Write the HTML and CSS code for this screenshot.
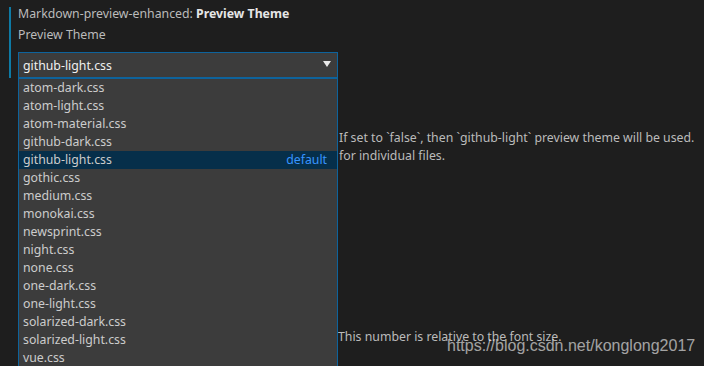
FILE: index.html
```html
<!DOCTYPE html>
<html lang="en">
<head>
    <meta charset="UTF-8">
    <title>Settings - Preview Theme</title>
    <link rel="stylesheet" href="styles.css">
</head>
<body>
<div class="setting">
    <div class="setting-title">Markdown-preview-enhanced: <b>Preview Theme</b></div>
    <div class="setting-desc">Preview Theme</div>
    <div class="select-wrap">
        <div class="select-box">
            <span>github-light.css</span>
            <svg class="arrow" width="8" height="6" viewBox="0 0 8 6"><path d="M0 0h8L4 6z" fill="#e8e8e8"/></svg>
        </div>
        <ul class="options">
            <li>atom-dark.css</li>
            <li>atom-light.css</li>
            <li>atom-material.css</li>
            <li>github-dark.css</li>
            <li class="selected">github-light.css <span class="tag">default</span></li>
            <li>gothic.css</li>
            <li>medium.css</li>
            <li>monokai.css</li>
            <li>newsprint.css</li>
            <li>night.css</li>
            <li>none.css</li>
            <li>one-dark.css</li>
            <li>one-light.css</li>
            <li>solarized-dark.css</li>
            <li>solarized-light.css</li>
            <li>vue.css</li>
        </ul>
    </div>
</div>

<div class="behind">
    <div class="line">If set to `false`, then `github-light` preview theme will be used.</div>
    <div class="line">for individual files.</div>
    <div class="line later">This number is relative to the font size.</div>
</div>

<div class="watermark">https://blog.csdn.net/konglong2017</div>
</body>
</html>
```

FILE: styles.css
```css
body {
    margin: 0;
    height: 100vh;
    overflow: hidden;
    background: #1e1e1e;
    color: #cccccc;
    font-family: 'Noto Sans', 'Open Sans', sans-serif;
    font-size: 12.3px;
    position: relative;
}

.setting {
    margin: 7px 0 0 9px;
    padding-left: 7px;
    border-left: 2px solid #0e7aa5;
}

.setting-title {
    color: #bbbbbb;
    line-height: 14px;
    white-space: nowrap;
}

.setting-title b {
    color: #e6e6e6;
}

.setting-desc {
    color: #bbbbbb;
    line-height: 18px;
    margin-top: 5px;
}

.select-wrap {
    position: relative;
    margin-top: 8px;
    width: 320px;
}

.select-box {
    height: 24px;
    background: #3c3c3c;
    border: 1px solid #0e639c;
    display: flex;
    align-items: center;
    justify-content: space-between;
    padding: 0 6px 0 4px;
    color: #f0f0f0;
    box-sizing: content-box;
    width: 308px;
}

.arrow {
    margin-bottom: 3px;
}

.options {
    position: absolute;
    top: 26px;
    left: 0;
    width: 318px;
    margin: 0;
    padding: 0;
    list-style: none;
    background: #3c3c3c;
    border: 1px solid #0e639c;
    z-index: 2;
}

.options li {
    height: 18px;
    line-height: 18px;
    padding: 0 10px 0 4px;
    display: flex;
    justify-content: space-between;
    white-space: nowrap;
}

.options li.selected {
    background: #062f4a;
}

.tag {
    color: #3794ff;
}

.behind {
    padding-left: 339px;
    margin-top: 51px;
    color: #bbbbbb;
    white-space: nowrap;
}

.line {
    line-height: 18px;
}

.line.later {
    margin-top: 163px;
    margin-left: -1px;
}

.watermark {
    position: absolute;
    left: 447px;
    top: 337px;
    font-family: 'Liberation Sans', Arial, sans-serif;
    font-size: 16px;
    color: rgba(255, 255, 255, 0.6);
    z-index: 3;
}
```
